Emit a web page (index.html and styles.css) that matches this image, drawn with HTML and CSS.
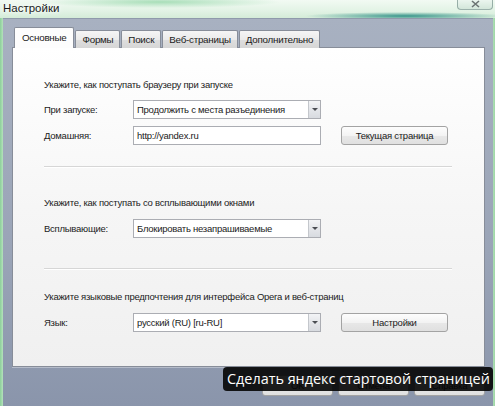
FILE: index.html
```html
<!DOCTYPE html>
<html lang="ru">
<head>
<meta charset="utf-8">
<title>Настройки</title>
<link rel="stylesheet" href="styles.css">
</head>
<body>
<div class="screen">
  <div class="titlebar">
    <span class="title">Настройки</span>
    <div class="close">
      <svg width="9" height="8" viewBox="0 0 9 8"><path d="M1 1 L8 7 M8 1 L1 7" stroke="#6b7373" stroke-width="1.6" fill="none"/></svg>
    </div>
  </div>
  <div class="frame">
    <div class="tabs">
      <div class="tab active">Основные</div>
      <div class="tab">Формы</div>
      <div class="tab">Поиск</div>
      <div class="tab">Веб-страницы</div>
      <div class="tab">Дополнительно</div>
    </div>
    <div class="panel">
      <p class="heading h1">Укажите, как поступать браузеру при запуске</p>
      <div class="row first">
        <span class="label">При запуске:</span>
        <div class="select"><span class="value">Продолжить с места разъединения</span><span class="arrow"></span></div>
      </div>
      <div class="row second">
        <span class="label">Домашняя:</span>
        <div class="input">http://yandex.ru</div>
        <button class="btn side">Текущая страница</button>
      </div>
      <div class="sep s1"></div>
      <p class="heading h2">Укажите, как поступать со всплывающими окнами</p>
      <div class="row first">
        <span class="label">Всплывающие:</span>
        <div class="select"><span class="value">Блокировать незапрашиваемые</span><span class="arrow"></span></div>
      </div>
      <div class="sep s2"></div>
      <p class="heading h3">Укажите языковые предпочтения для интерфейса Opera и веб-страниц</p>
      <div class="row first">
        <span class="label">Язык:</span>
        <div class="select"><span class="value">русский (RU) [ru-RU]</span><span class="arrow"></span></div>
        <button class="btn side">Настройки</button>
      </div>
    </div>
    <div class="actions">
      <button class="btn act">OK</button>
      <button class="btn act">Отмена</button>
      <button class="btn act">Справка</button>
    </div>
  </div>
  <div class="tooltip">Сделать яндекс стартовой страницей</div>
</div>
</body>
</html>
```
FILE: styles.css
```css
* { box-sizing: border-box; margin: 0; padding: 0; }
html, body { width: 495px; height: 406px; overflow: hidden; }
body {
  font-family: "Liberation Sans", Arial, sans-serif;
  font-size: 9.5px;
  letter-spacing: -0.25px;
  color: #1b1b1b;
  background: #a6d8ae;
}
.screen {
  position: relative;
  width: 495px;
  height: 406px;
  display: flex;
  flex-direction: column;
  background: linear-gradient(90deg, #8ccf9a 0, #b4e2bb 3px, #b4e2bb 492px, #9ed6a6 495px);
}
.titlebar {
  height: 18px;
  flex: none;
  display: flex;
  justify-content: space-between;
  align-items: flex-start;
  padding: 0 2px 0 3px;
  background:
    radial-gradient(ellipse 100px 4px at 405px 16px, rgba(40,140,130,0.9), rgba(40,140,130,0) 100%),
    radial-gradient(ellipse 120px 6px at 160px 2px, rgba(150,215,170,0.8), rgba(150,215,170,0) 100%),
    linear-gradient(180deg, #f2faf3 0, #e2f3e5 60%, #d4ecd8 100%);
}
.title {
  font-size: 11.5px;
  letter-spacing: 0;
  line-height: 16px;
  color: #1a1a1a;
  text-shadow: 0 0 6px #fff, 0 0 3px #fff;
}
.close {
  width: 36px;
  height: 11px;
  margin-top: -1px;
  border: 1px solid rgba(90,120,115,0.55);
  border-top: none;
  border-radius: 0 0 4px 4px;
  background: linear-gradient(180deg, #eef7f1, #d3e6da);
  display: flex;
  align-items: center;
  justify-content: center;
}
.frame {
  flex: 1;
  margin: 0 2px 0 3px;
  padding: 9px 8px 0 9px;
  background: linear-gradient(180deg, #a8b1c1 0, #9aa4b7 60%, #8a95ab 100%);
  border-top: 1px solid #8f9aab;
}
.tabs {
  display: flex;
  align-items: flex-end;
  gap: 1px;
  height: 20px;
  padding-left: 2px;
  margin-bottom: -1px;
  position: relative;
  z-index: 1;
}
.tab {
  height: 18px;
  padding: 0 6px;
  border: 1px solid #878d99;
  border-bottom: none;
  border-radius: 2px 2px 0 0;
  background: linear-gradient(180deg, #f5f5f5 0, #ebebeb 50%, #dedede 51%, #d6d6d6 100%);
  line-height: 17px;
  font-size: 9.8px;
  color: #1b1b1b;
  white-space: nowrap;
}
.tab.active {
  height: 21px;
  background: #fdfdfd;
  line-height: 20px;
  padding: 0 7px;
}
.panel {
  height: 320px;
  border: 1px solid #878d99;
  background: linear-gradient(180deg, #ffffff 0, #f6f6f6 50%, #f0f0f0 100%);
  padding: 30px 32px 0 31px;
  box-shadow: 0 1px 0 rgba(255,255,255,0.35);
}
.heading { line-height: 14px; white-space: nowrap; }
.h2 { margin-top: 28px; }
.h3 { margin-top: 20px; }
.row {
  display: flex;
  align-items: center;
  height: 19px;
}
.row.first { margin-top: 8px; }
.h2 + .row.first, .h3 + .row.first { margin-top: 9px; }
.row.second { margin-top: 7px; }
.label { width: 89px; flex: none; }
.select, .input {
  width: 188px;
  height: 19px;
  border: 1px solid #abadb3;
  background: #fff;
  display: flex;
  align-items: center;
  padding-left: 3px;
}
.select .value { flex: 1; white-space: nowrap; overflow: hidden; }
.select .arrow {
  width: 12px;
  height: 17px;
  border-left: 1px solid #c4c7cc;
  background: linear-gradient(180deg, #f3f4f6 0, #e4e6ea 50%, #d8dbe0 100%);
  position: relative;
}
.select .arrow::after {
  content: "";
  position: absolute;
  left: 3px;
  top: 7px;
  border-left: 3px solid transparent;
  border-right: 3px solid transparent;
  border-top: 3px solid #4a4d53;
}
.sep {
  height: 2px;
  border-top: 1px solid #d6d6d6;
  border-bottom: 1px solid #fff;
}
.s1 { margin-top: 21px; }
.s2 { margin-top: 30px; }
.btn {
  font: inherit;
  letter-spacing: inherit;
  color: #1b1b1b;
  height: 19px;
  border: 1px solid #a3a3a3;
  border-radius: 3px;
  background: linear-gradient(180deg, #fdfdfd 0, #f3f3f3 50%, #e8e8e8 51%, #e0e0e0 100%);
}
.btn.side { width: 107px; margin-left: 20px; }
.actions {
  display: flex;
  justify-content: flex-end;
  gap: 5px;
  margin-top: 8px;
}
.btn.act { width: 71px; height: 21px; }
.tooltip {
  position: absolute;
  left: 223px;
  top: 367px;
  width: 270px;
  height: 24px;
  padding-left: 4px;
  border-radius: 4px;
  background: rgba(4,4,4,0.9);
  color: #fff;
  font-family: "Open Sans", "DejaVu Sans", sans-serif;
  font-size: 14.4px;
  letter-spacing: 0;
  line-height: 23px;
  white-space: nowrap;
}
```
